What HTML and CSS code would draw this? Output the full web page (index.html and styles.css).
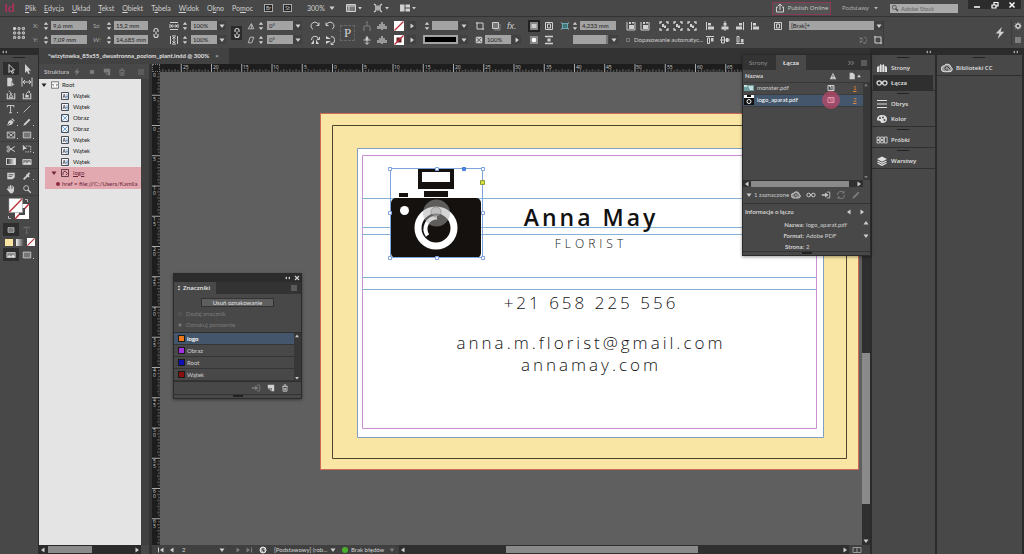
FILE: index.html
```html
<!DOCTYPE html>
<html lang="pl">
<head>
<meta charset="utf-8">
<title>wizytowka_85x55_dwustronna_poziom_plant.indd</title>
<link rel="stylesheet" href="styles.css">
</head>
<body>
<svg class="defs" aria-hidden="true">
  <defs>
    <symbol id="down" viewBox="0 0 8 8"><path d="M1.5 2.5h5L4 6z" fill="currentColor"/></symbol>
    <symbol id="up" viewBox="0 0 8 8"><path d="M1.5 5.5h5L4 2z" fill="currentColor"/></symbol>
    <symbol id="right" viewBox="0 0 8 8"><path d="M2.5 1.5v5L6 4z" fill="currentColor"/></symbol>
    <symbol id="left" viewBox="0 0 8 8"><path d="M5.5 1.5v5L2 4z" fill="currentColor"/></symbol>
    <symbol id="spin" viewBox="0 0 6 10"><path d="M.8 3.8L3 1l2.2 2.8zM.8 6.2L3 9l2.2-2.8z" fill="currentColor"/></symbol>
    <symbol id="menu" viewBox="0 0 8 8"><path d="M1 2h6M1 4h6M1 6h6" stroke="currentColor" stroke-width=".8"/></symbol>
    <symbol id="dbl" viewBox="0 0 8 8"><path d="M4 2.500v3L2 4zM7 2.500v3L5 4z" fill="currentColor"/></symbol>
    <symbol id="dblr" viewBox="0 0 8 8"><path d="M1.500 2L3.500 4L1.500 6M4.500 2L6.500 4L4.500 6" fill="none" stroke="currentColor" stroke-width=".9"/></symbol>
    <symbol id="chain" viewBox="0 0 12 12"><path d="M4 5V3.500a2 2 0 0 1 4 0V5M4 7v1.500a2 2 0 0 0 4 0V7M6 4.500v3" fill="none" stroke="currentColor" stroke-width="1.200"/></symbol>
    <symbol id="link" viewBox="0 0 12 10"><circle cx="3.200" cy="5" r="2.200" fill="none" stroke="currentColor" stroke-width="1.200"/><circle cx="8.800" cy="5" r="2.200" fill="none" stroke="currentColor" stroke-width="1.200"/><path d="M4.500 5h3" stroke="currentColor"/></symbol>
    <symbol id="hscale" viewBox="0 0 10 10"><path d="M1 1.500h8M1 8.500h8M1 3v4M9 3v4M2 5h6M3.500 3.500L2 5l1.500 1.500M6.500 3.500L8 5 6.500 6.500" fill="none" stroke="currentColor"/></symbol>
    <symbol id="vscale" viewBox="0 0 10 10"><path d="M1.500 1v8M8.500 1v8M3 1h4M3 9h4M5 2v6M3.500 3.500L5 2l1.500 1.500M3.500 6.500L5 8l1.500-1.500" fill="none" stroke="currentColor"/></symbol>
    <symbol id="angle" viewBox="0 0 10 10"><path d="M1.500 8.500h7L5.500 2z" fill="none" stroke="currentColor"/><path d="M5.500 3v5" stroke="currentColor"/></symbol>
    <symbol id="shear" viewBox="0 0 10 10"><path d="M1.500 8.500L4 1.500h4.500L6 8.500z" fill="none" stroke="currentColor"/></symbol>
    <symbol id="rotr" viewBox="0 0 10 10"><path d="M3 8.300A3.800 3.800 0 1 1 8.500 4M9 1.500V4.500H6.500" fill="none" stroke="currentColor"/></symbol>
    <symbol id="rotl" viewBox="0 0 10 10"><path d="M7 8.300A3.800 3.800 0 1 0 1.500 4M1 1.500V4.500H3.500" fill="none" stroke="currentColor"/></symbol>
    <symbol id="fliph" viewBox="0 0 10 10"><path d="M1 9h3V4.500zM9 9H6V4.500z" fill="currentColor"/><path d="M1.500 5a3.500 3.500 0 0 1 7-.5M9.500 2v2.500H7" fill="none" stroke="currentColor"/></symbol>
    <symbol id="flipv" viewBox="0 0 10 10"><path d="M1 1v3h5zM1 9V6h5z" fill="currentColor"/><path d="M6 1.500a3.500 3.500 0 0 1 .5 7M8.500 9.500H6V7.500" fill="none" stroke="currentColor"/></symbol>
    <symbol id="tree" viewBox="0 0 10 10"><path d="M5 1v4M2 9V5h6v4M1 9h2M7 9h2M4 1h2" fill="none" stroke="currentColor"/></symbol>
    <symbol id="dist" viewBox="0 0 10 10"><path d="M1 8V5M3 8V3M5 9V1M7 8V3M9 8V5" stroke="currentColor" stroke-width="1.200"/></symbol>
    <symbol id="pin" viewBox="0 0 10 10"><path d="M5 1v8M1.500 5h7M3 7.500L5 9.500l2-2" fill="none" stroke="currentColor"/><circle cx="5" cy="3.500" r="1.500" fill="currentColor"/></symbol>
    <symbol id="nofill" viewBox="0 0 10 10"><path d="M0 0h10v10H0z" fill="#fff"/><path d="M.5 9.500l9-9" stroke="#b8303a" stroke-width="1.300"/></symbol>
    <symbol id="nostroke" viewBox="0 0 10 10"><path d="M0 0h10v10H0z" fill="#fff"/><path d="M2.500 2.500h5v5h-5z" fill="#6b2228"/><path d="M.5 9.500l9-9" stroke="#b8303a" stroke-width="1.300"/></symbol>
    <symbol id="crop" viewBox="0 0 10 10"><path d="M2 1v7h7M1 2h7v7" fill="none" stroke="currentColor"/></symbol>
    <symbol id="box" viewBox="0 0 10 10"><path d="M1.500 1.500h6v6h-6z" fill="#777" stroke="currentColor"/><path d="M3 9h6V3" fill="none" stroke="#888"/></symbol>
    <symbol id="opac" viewBox="0 0 10 10"><path d="M1.500 1.500h7v7h-7z" fill="#bbb" stroke="#ddd"/><path d="M2 2l6 6M8 2L2 8" stroke="#555"/></symbol>
    <symbol id="wrap" viewBox="0 0 10 10"><path d="M1 1h8v8H1z" fill="#888"/><path d="M2.500 3h5v4h-5z" fill="#ccc"/></symbol>
    <symbol id="wrap2" viewBox="0 0 10 10"><path d="M1.500 1.500h7v7h-7zM3.500 3h3v4h-3z" fill="none" stroke="currentColor"/></symbol>
    <symbol id="wrap3" viewBox="0 0 10 10"><path d="M1 1h8v8H1z" fill="#888"/><circle cx="5" cy="5" r="2.300" fill="#fff"/></symbol>
    <symbol id="wrap4" viewBox="0 0 10 10"><path d="M1 1.500h8M1 8.500h8" stroke="currentColor" stroke-width="1.500"/><path d="M3.500 3.500h3v3h-3z" fill="currentColor"/></symbol>
    <symbol id="corner" viewBox="0 0 12 10"><path d="M3 2h6v6H3z" fill="#477" stroke="#6fb6c8"/><path d="M1 1l2 1M11 1L9 2M1 9l2-1M11 9L9 8" stroke="#9fd4e0"/></symbol>
    <symbol id="fit" viewBox="0 0 10 10"><path d="M1 1v8h8V1" fill="none" stroke="currentColor"/><path d="M3 4h5v4H3zM3 1h2v2H3zM6 1h2v1.500H6z" fill="currentColor"/></symbol>
    <symbol id="fit2" viewBox="0 0 10 10"><path d="M1 3V1h2M7 1h2v2M9 7v2H7M3 9H1V7" fill="none" stroke="currentColor" stroke-width="1.300"/><path d="M3 3h2v1.500h2V7H5V6H3z" fill="currentColor"/></symbol>
    <symbol id="screen" viewBox="0 0 10 10"><path d="M2 2.500h6v5H2z" fill="#aaa"/><path d="M1 1l2 1.500M9 1L7 2.500M1 9l2-1.500M9 9L7 7.500" stroke="currentColor" stroke-width="1.300"/></symbol>
    <symbol id="viewopt" viewBox="0 0 10 10"><path d="M.5 1.500h9v7h-9z" fill="#777" stroke="currentColor"/><path d="M1 3h8M3 3v5" stroke="currentColor"/></symbol>
    <symbol id="arrange" viewBox="0 0 10 10"><path d="M0 1.500h4.500v7H0zM5.500 1.500H10v3H5.500zM5.500 5.500H10v3H5.500z" fill="currentColor"/></symbol>
    <symbol id="al" viewBox="0 0 10 10"><path d="M1.500 1v8" stroke="currentColor"/><path d="M3 2h3v2.500H3zM3 5.500h6v3H3z" fill="currentColor"/></symbol>
    <symbol id="ac" viewBox="0 0 10 10"><path d="M5 0v10" stroke="currentColor"/><path d="M3.500 2h3v2.500h-3zM1.500 5.500h7v3h-7z" fill="currentColor"/></symbol>
    <symbol id="ar" viewBox="0 0 10 10"><path d="M8.500 1v8" stroke="currentColor"/><path d="M4 2h3v2.500H4zM1 5.500h6v3H1z" fill="currentColor"/></symbol>
    <symbol id="at" viewBox="0 0 10 10"><path d="M1 1.500h8M2.500 3h2v5.500h-2z" fill="none" stroke="currentColor"/><path d="M6 3h2.500v3.500H6z" fill="currentColor"/></symbol>
    <symbol id="am" viewBox="0 0 10 10"><path d="M0 5h10M1.500 2h3v6h-3z" fill="none" stroke="currentColor"/><path d="M6 3h2.500v4H6z" fill="currentColor"/></symbol>
    <symbol id="ab" viewBox="0 0 10 10"><path d="M1 8.500h8M2 1.500h2V7H2z" fill="none" stroke="currentColor"/><path d="M6 4h2.500v3.500H6z" fill="currentColor"/></symbol>
    <symbol id="doc" viewBox="0 0 10 10"><path d="M2 1h4l2.500 2.500V9H2z" fill="currentColor"/></symbol>
    <symbol id="warn" viewBox="0 0 10 10"><path d="M5 .8L9 9H1z" fill="currentColor"/><path d="M5 3.500v3M5 7.300v1" stroke="#484848"/></symbol>
    <symbol id="trash" viewBox="0 0 10 10"><path d="M1.500 3h7M4 2.500V1h2v1.500M2.500 3.500v5.500h5V3.500M4.200 5v3M5.800 5v3" fill="none" stroke="currentColor"/></symbol>
    <symbol id="newp" viewBox="0 0 10 10"><path d="M1 1h8v8H6V5H1z" fill="currentColor"/><path d="M1.500 6H5v3" fill="none" stroke="currentColor"/></symbol>
    <symbol id="bolt" viewBox="0 0 10 10"><path d="M6.500 0L1.500 5.500h3L3 10l5.500-6h-3z" fill="currentColor"/></symbol>
    <symbol id="gear" viewBox="0 0 10 10"><circle cx="5" cy="5" r="2.600" fill="none" stroke="currentColor" stroke-width="1.800"/><path d="M5 .5v2M5 7.500v2M.5 5h2M7.500 5h2M2 2l1 1M8 8L7 7M8 2L7 3M2 8l1-1" stroke="currentColor"/></symbol>
    <symbol id="t-sel" viewBox="0 0 12 12"><path d="M4 1.500v8l2-2 1.300 3 1.200-.6L7.200 7H9.500z" fill="none" stroke="currentColor"/></symbol>
    <symbol id="t-dir" viewBox="0 0 12 12"><path d="M4 1v9l2-2 1.300 3 1.500-.6L7.500 7.500H10z" fill="currentColor"/></symbol>
    <symbol id="t-page" viewBox="0 0 12 12"><path d="M1.500 1h4.500l1.500 1.500V11h-6z" fill="currentColor"/><path d="M7 5v6.500l1.500-1.500h2z" fill="currentColor" stroke="#484848" stroke-width=".6"/></symbol>
    <symbol id="t-gap" viewBox="0 0 12 12"><path d="M1 1.500v9M11 1.500v9M2.500 6h7M4 4L2 6l2 2M8 4l2 2-2 2" fill="none" stroke="currentColor"/></symbol>
    <symbol id="t-coll" viewBox="0 0 12 12"><path d="M1.500 4v6.500h9V4" fill="none" stroke="currentColor" stroke-width="1.300"/><path d="M4 7h4v2H4zM3 1.500c2 0 3 1 3 4M4.500 4L6 6l1.500-2" fill="none" stroke="currentColor"/></symbol>
    <symbol id="t-plac" viewBox="0 0 12 12"><path d="M1.500 4v6.500h9V4" fill="none" stroke="currentColor" stroke-width="1.300"/><path d="M4 6h4v3H4z" fill="currentColor"/><path d="M5 6c0-3 1.500-3.500 4-4M7.500 1L9.500 2 8.500 4" fill="none" stroke="currentColor"/></symbol>
    <symbol id="t-type" viewBox="0 0 12 12"><path d="M1.500 4V1.800h8V4M5.500 2v8.500M3.800 10.500h3.400" fill="none" stroke="currentColor" stroke-width="1.100"/></symbol>
    <symbol id="t-line" viewBox="0 0 12 12"><path d="M2 10l8-8" stroke="currentColor"/></symbol>
    <symbol id="t-pen" viewBox="0 0 12 12"><path d="M1.500 10.500l1.300-5L6 3.300l3 3L6.600 9.200z" fill="currentColor"/><path d="M7 2l3 3" stroke="currentColor" stroke-width="1.500"/><path d="M2 10l3-3" stroke="#484848"/></symbol>
    <symbol id="t-pencil" viewBox="0 0 12 12"><path d="M1.500 10.500l1-2.500 6-6 1.600 1.500-6 6z" fill="currentColor"/></symbol>
    <symbol id="t-frame" viewBox="0 0 12 12"><path d="M1.500 2.500h9v7h-9zM1.500 2.500l9 7M10.500 2.500l-9 7" fill="none" stroke="currentColor"/></symbol>
    <symbol id="t-rect" viewBox="0 0 12 12"><path d="M1.500 2.500h9v7h-9z" fill="#777" stroke="currentColor"/></symbol>
    <symbol id="t-cut" viewBox="0 0 12 12"><path d="M3.500 4.500L10.500 9M3.500 7.500L10.500 3" stroke="currentColor" stroke-width="1.200"/><circle cx="2.600" cy="3.800" r="1.400" fill="none" stroke="currentColor"/><circle cx="2.600" cy="8.200" r="1.400" fill="none" stroke="currentColor"/></symbol>
    <symbol id="t-free" viewBox="0 0 12 12"><path d="M1 1v7l2-2h3z" fill="currentColor"/><path d="M4.500 2.500h6v7H4" fill="none" stroke="currentColor" stroke-dasharray="2 1"/></symbol>
    <symbol id="t-fea" viewBox="0 0 12 12"><path d="M1 3h10v6H1z" fill="#888" stroke="currentColor"/><path d="M1.500 8.500L4 6l2 2 2.500-2.500L11 8.500z" fill="#ddd"/></symbol>
    <symbol id="t-note" viewBox="0 0 12 12"><path d="M1.500 2h9v5.500L8 10H1.500z" fill="currentColor"/><path d="M3 4.500h6M3 6.500h4" stroke="#484848"/></symbol>
    <symbol id="t-eye" viewBox="0 0 12 12"><path d="M2 10l4.500-4.500" stroke="currentColor" stroke-width="2"/><path d="M5.500 4l3 3M7 5l2-3" stroke="currentColor" stroke-width="2"/></symbol>
    <symbol id="t-hand" viewBox="0 0 12 12"><path d="M3.500 7V3M5.300 6V1.800M7.200 6V2.200M9 7V3.500M1.600 6l2 2" stroke="currentColor" stroke-width="1.300" stroke-linecap="round"/><path d="M3 6h6.600v2.500L8 11H5L3 8.500z" fill="currentColor"/></symbol>
    <symbol id="t-zoom" viewBox="0 0 12 12"><circle cx="5" cy="5" r="3" fill="none" stroke="currentColor"/><path d="M7 7l3.500 3.500" stroke="currentColor" stroke-width="1.600"/></symbol>
    <symbol id="s-txt" viewBox="0 0 8 8"><path d="M.5.5h7v7h-7z" fill="#f4f4f4" stroke="#4a4f58"/><path d="M2 6l1.200-4L4.500 6M2.400 4.700h1.700" fill="none" stroke="#445" stroke-width=".7"/><path d="M5 3h2M5 4.500h2M5 6h2" stroke="#5a8cc0" stroke-width=".8"/></symbol>
    <symbol id="s-img" viewBox="0 0 8 8"><path d="M.5.500h7v7h-7z" fill="#eef4fa" stroke="#4a4f58"/><path d="M1 1l6 6M7 1L1 7" stroke="#5590c8" stroke-width=".8"/></symbol>
    <symbol id="d-pages" viewBox="0 0 12 10"><path d="M1 4l2.500-1.500V9H1zM8.500 2.500L11 4v5H8.500z" fill="currentColor"/><path d="M4 1l1.700 1v7H4zM8 1L6.300 2v7H8z" fill="currentColor"/></symbol>
    <symbol id="d-stroke" viewBox="0 0 12 10"><path d="M1 1.500h10M1 5h10M1 8.500h10" stroke="currentColor"/></symbol>
    <symbol id="d-color" viewBox="0 0 12 10"><path d="M6 1c3 0 5 1.600 5 4S9 9 6 9c-1.500 0-1-1.500-2-2S1 7 1 5s2-4 5-4z" fill="currentColor"/><circle cx="4" cy="4" r="1" fill="#484848"/><circle cx="7" cy="3.500" r="1" fill="#484848"/><circle cx="8.500" cy="6" r="1" fill="#484848"/></symbol>
    <symbol id="d-swatch" viewBox="0 0 12 10"><path d="M1 2h2.700v2.500H1zM4.700 2h2.700v2.500H4.700zM1 5.500h2.700V8H1zM4.700 5.500h2.700V8H4.700zM8.400 2h2.700v6H8.400z" fill="none" stroke="currentColor" stroke-width=".8"/></symbol>
    <symbol id="d-layers" viewBox="0 0 12 10"><path d="M6 .5l5 2.500-5 2.700L1 3z" fill="currentColor"/><path d="M1.500 5L6 7.400 10.500 5M1.500 7L6 9.400 10.500 7" fill="none" stroke="currentColor" stroke-width="1.200"/></symbol>
    <symbol id="cc" viewBox="0 0 12 10"><path d="M3.500 8.700a3 3 0 0 1-.3-6A3.800 3.800 0 0 1 10 4.200a2.400 2.400 0 0 1-1 4.500z" fill="#999" stroke="currentColor"/><path d="M7 6.500a1.800 1.800 0 1 1 0-2.500l2 2" fill="none" stroke="#383838"/></symbol>
    <symbol id="goto" viewBox="0 0 12 10"><path d="M1 4h4V2l4 3-4 3V6H1z" fill="currentColor"/><path d="M7 1.500h3.500v7H7" fill="none" stroke="currentColor"/></symbol>
    <symbol id="refresh" viewBox="0 0 10 10"><path d="M1.500 5A3.500 3.500 0 0 1 8 3M8.500 5A3.500 3.500 0 0 1 2 7M8 1v2H6M2 9V7h2" fill="none" stroke="currentColor"/></symbol>
    <symbol id="emb" viewBox="0 0 8 8"><path d="M1 1.500h6v5H1z" fill="none" stroke="currentColor"/><path d="M2.500 2.500h1.500v3M5 3h1.500M5 5h1.500" stroke="currentColor" fill="none"/></symbol>
  </defs>
</svg>

<header class="menubar">
  <strong class="logo">Id</strong>
  <nav class="menus">
    <a href="#"><u>P</u>lik</a><a href="#"><u>E</u>dycja</a><a href="#"><u>U</u>kład</a><a href="#"><u>T</u>ekst</a><a href="#"><u>O</u>biekt</a><a href="#">T<u>a</u>bela</a><a href="#"><u>W</u>idok</a><a href="#">O<u>k</u>no</a><a href="#">Po<u>m</u>oc</a>
  </nav>
  <div class="apps">
    <button class="app">Br</button><button class="app">St</button>
    <button class="zoom">300% <svg class="i8"><use href="#down"/></svg></button>
    <button class="view"><svg class="i10"><use href="#viewopt"/></svg><svg class="i6"><use href="#down"/></svg></button>
    <button class="view"><svg class="i10"><use href="#screen"/></svg><svg class="i6"><use href="#down"/></svg></button>
    <button class="view"><svg class="i10"><use href="#arrange"/></svg><svg class="i6"><use href="#down"/></svg></button>
  </div>
  <button class="publish"><svg class="i10" viewBox="0 0 10 10"><path d="M3 4H1.500v5h7V4H7M5 7V1.500M3 3l2-2 2 2" fill="none" stroke="currentColor"/></svg>Publish Online</button>
  <button class="workspace">Podstawy <svg class="i6"><use href="#down"/></svg></button>
  <label class="search"><svg class="i8"><use href="#t-zoom"/></svg><input type="text" placeholder="Adobe Stock" aria-label="Adobe Stock"></label>
  <div class="window-buttons">
    <button aria-label="Minimalizuj"><svg class="i8" viewBox="0 0 8 8"><path d="M1 6h6" stroke="currentColor" stroke-width="1.500"/></svg></button>
    <button aria-label="Przywróć"><svg class="i8" viewBox="0 0 8 8"><path d="M1 4h4v3H1zM3 4V1.500h4V5H5" fill="none" stroke="currentColor" stroke-width="1.200"/></svg></button>
    <button aria-label="Zamknij"><svg class="i8" viewBox="0 0 8 8"><path d="M1.500 1.500l5 5M6.500 1.500l-5 5" stroke="currentColor" stroke-width="1.500"/></svg></button>
  </div>
</header>

<section class="controls" aria-label="Sterowanie">
  <div class="group g-ref"><svg class="i12" viewBox="0 0 12 12"><path d="M1.500 1.500h9v9h-9zM6 1.500v9M1.500 6h9" fill="none" stroke="#888" stroke-dasharray="1 1"/><g fill="#777" stroke="#ccc" stroke-width=".8"><path d="M.5.500h2v2h-2z" fill="#eee"/><path d="M5 .5h2v2H5zM9.500.500h2v2h-2zM.5 5h2v2h-2zM5 5h2v2H5zM9.500 5h2v2h-2zM.5 9.500h2v2h-2zM5 9.500h2v2H5zM9.500 9.500h2v2h-2z"/></g></svg></div>
  <div class="group g-pos">
    <label class="row"><span class="lab">X:</span><svg class="spin"><use href="#spin"/></svg><input class="field w36" type="text" value="9,6 mm"></label>
    <label class="row"><span class="lab">Y:</span><svg class="spin"><use href="#spin"/></svg><input class="field w36" type="text" value="7,09 mm"></label>
  </div>
  <div class="group g-size">
    <label class="row"><span class="lab wide">Sz:</span><svg class="spin"><use href="#spin"/></svg><input class="field w34" type="text" value="15,2 mm"></label>
    <label class="row"><span class="lab wide">W:</span><svg class="spin"><use href="#spin"/></svg><input class="field w34" type="text" value="14,685 mm"></label>
  </div>
  <div class="group g-chain"><svg class="i12"><use href="#chain"/></svg></div>
  <div class="group g-scale">
    <div class="row"><svg class="i10"><use href="#hscale"/></svg><svg class="spin"><use href="#spin"/></svg><input class="field w26" type="text" value="100%" aria-label="Skala X"><button class="drop" aria-label="Wybierz"><svg class="i8"><use href="#down"/></svg></button></div>
    <div class="row"><svg class="i10"><use href="#vscale"/></svg><svg class="spin"><use href="#spin"/></svg><input class="field w26" type="text" value="100%" aria-label="Skala Y"><button class="drop" aria-label="Wybierz"><svg class="i8"><use href="#down"/></svg></button></div>
  </div>
  <div class="group g-lock"><button class="lock" aria-label="Zachowaj proporcje"><svg class="i12"><use href="#chain"/></svg></button></div>
  <div class="group g-rot">
    <div class="row"><svg class="i8"><use href="#angle"/></svg><svg class="spin"><use href="#spin"/></svg><input class="field w26" type="text" value="0°" aria-label="Obrót"><button class="drop" aria-label="Wybierz"><svg class="i8"><use href="#down"/></svg></button></div>
    <div class="row"><svg class="i8"><use href="#shear"/></svg><svg class="spin"><use href="#spin"/></svg><input class="field w26" type="text" value="0°" aria-label="Pochylenie"><button class="drop" aria-label="Wybierz"><svg class="i8"><use href="#down"/></svg></button></div>
  </div>
  <div class="group g-icons">
    <div class="row pair"><svg class="i10"><use href="#rotr"/></svg><svg class="i10"><use href="#rotl"/></svg></div>
    <div class="row pair"><svg class="i10"><use href="#fliph"/></svg><svg class="i10"><use href="#flipv"/></svg></div>
  </div>
  <div class="group g-p"><span class="para">P</span></div>
  <div class="group g-icons g-tree">
    <div class="row pair"><svg class="i10 dim"><use href="#tree"/></svg><svg class="i10"><use href="#dist"/></svg></div>
    <div class="row pair"><svg class="i10"><use href="#pin"/></svg><svg class="i10"><use href="#dist"/></svg></div>
  </div>
  <div class="group g-fill">
    <div class="row"><svg class="i10"><use href="#nofill"/></svg><button class="drop" aria-label="Wypełnienie"><svg class="i8"><use href="#right"/></svg></button></div>
    <div class="row"><svg class="i10"><use href="#nostroke"/></svg><button class="drop" aria-label="Obrys"><svg class="i8"><use href="#right"/></svg></button></div>
  </div>
  <div class="group g-stroke">
    <div class="row end"><svg class="spin"><use href="#spin"/></svg><input class="field w26" type="text" value="" aria-label="Grubość obrysu"><button class="drop" aria-label="Wybierz"><svg class="i8"><use href="#down"/></svg></button></div>
    <div class="row end"><span class="line-style"></span><button class="drop" aria-label="Styl obrysu"><svg class="i8"><use href="#down"/></svg></button></div>
  </div>
  <div class="group g-fx">
    <div class="row fxrow"><svg class="i10"><use href="#crop"/></svg><svg class="i10"><use href="#box"/></svg><em class="fx">fx.</em></div>
    <div class="row"><svg class="i8"><use href="#opac"/></svg><input class="field w26" type="text" value="100%" aria-label="Krycie"><button class="drop" aria-label="Wybierz"><svg class="i8"><use href="#right"/></svg></button></div>
  </div>
  <div class="group g-wrap">
    <div class="row pair"><svg class="i10 on"><use href="#wrap"/></svg><svg class="i10"><use href="#wrap2"/></svg></div>
    <div class="row pair"><svg class="i10"><use href="#wrap3"/></svg><svg class="i10"><use href="#wrap4"/></svg></div>
  </div>
  <div class="group g-corner">
    <div class="row"><svg class="i10"><use href="#corner"/></svg><svg class="spin"><use href="#spin"/></svg><input class="field w36" type="text" value="4,233 mm" aria-label="Narożnik"></div>
    <div class="row end"><span class="corner-style"></span><button class="drop" aria-label="Kształt narożnika"><svg class="i8"><use href="#down"/></svg></button></div>
  </div>
  <div class="group g-fit">
    <div class="row fits"><svg class="i10"><use href="#fit"/></svg><svg class="i10"><use href="#fit"/></svg><svg class="i10 gap"><use href="#fit2"/></svg><svg class="i10"><use href="#fit2"/></svg><svg class="i10"><use href="#fit2"/></svg></div>
    <label class="row auto"><input type="checkbox">Dopasowanie automatyc...</label>
  </div>
  <div class="group g-align">
    <div class="row pair"><svg class="i10"><use href="#al"/></svg><svg class="i10"><use href="#ac"/></svg><svg class="i10"><use href="#ar"/></svg><svg class="i10"><use href="#al"/></svg></div>
    <div class="row pair"><svg class="i10"><use href="#at"/></svg><svg class="i10"><use href="#am"/></svg><svg class="i10"><use href="#ab"/></svg></div>
  </div>
  <div class="group g-style">
    <div class="row"><svg class="i10"><use href="#wrap2"/></svg><span class="combo"><input class="field" type="text" value="[Brak]+" aria-label="Styl obiektu"><button class="drop" aria-label="Wybierz"><svg class="i8"><use href="#down"/></svg></button></span></div>
    <div class="row end"><svg class="i8 dim"><use href="#flipv"/></svg><svg class="i10"><use href="#crop"/></svg></div>
  </div>
  <div class="group g-end"><svg class="i12"><use href="#bolt"/></svg></div>
  <div class="group g-menu"><div class="row"><svg class="i8"><use href="#gear"/></svg></div><div class="row"><svg class="i8"><use href="#menu"/></svg></div></div>
</section>

<main class="work">
  <aside class="tools" aria-label="Narzędzia">
    <div class="strip left"><svg class="i8"><use href="#dbl"/></svg></div>
    <div class="grip"></div>
    <div class="toolgrid">
      <button class="active" aria-label="Zaznaczanie"><svg class="i12"><use href="#t-sel"/></svg></button><button aria-label="Zaznaczanie bezpośrednie"><svg class="i12"><use href="#t-dir"/></svg></button>
      <button aria-label="Strona"><svg class="i10"><use href="#t-page"/></svg></button><button aria-label="Odstęp"><svg class="i12"><use href="#t-gap"/></svg></button>
      <button aria-label="Zbieranie"><svg class="i10"><use href="#t-coll"/></svg></button><button aria-label="Umieszczanie"><svg class="i10"><use href="#t-plac"/></svg></button>
    </div>
    <div class="toolgrid">
      <button class="more" aria-label="Tekst"><svg class="i10"><use href="#t-type"/></svg></button><button aria-label="Linia"><svg class="i10"><use href="#t-line"/></svg></button>
      <button class="more" aria-label="Pióro"><svg class="i10"><use href="#t-pen"/></svg></button><button class="more" aria-label="Ołówek"><svg class="i10"><use href="#t-pencil"/></svg></button>
      <button class="more" aria-label="Ramka"><svg class="i10"><use href="#t-frame"/></svg></button><button class="more" aria-label="Prostokąt"><svg class="i10"><use href="#t-rect"/></svg></button>
    </div>
    <div class="toolgrid">
      <button aria-label="Nożyczki"><svg class="i10"><use href="#t-cut"/></svg></button><button class="more" aria-label="Przekształcanie"><svg class="i10"><use href="#t-free"/></svg></button>
      <button aria-label="Gradient"><span class="gradient"></span></button><button aria-label="Wtapianie"><svg class="i10"><use href="#t-fea"/></svg></button>
    </div>
    <div class="toolgrid">
      <button aria-label="Notatka"><svg class="i10"><use href="#t-note"/></svg></button><button class="more" aria-label="Kroplomierz"><svg class="i10"><use href="#t-eye"/></svg></button>
      <button aria-label="Rączka"><svg class="i10"><use href="#t-hand"/></svg></button><button aria-label="Lupka"><svg class="i10"><use href="#t-zoom"/></svg></button>
    </div>
    <svg class="fillstroke" viewBox="0 0 24 24"><path d="M8 7h14v15H8z" fill="#fff"/><path d="M8 22L22 7" stroke="#b8303a" stroke-width="1.500"/><path d="M12 11h6v7h-6z" fill="#484848"/><path d="M2 1.500h13.500v14H2z" fill="#fff" stroke="#999" stroke-width=".6"/><path d="M2.300 15L15 2" stroke="#b8303a" stroke-width="1.300"/><path d="M18 2.500h2.500V5M1.500 19v2.500H4" fill="none" stroke="#bbb"/></svg>
    <div class="toolgrid small">
      <button class="active" aria-label="Kontener"><svg class="i8"><use href="#t-rect"/></svg></button><button class="dim" aria-label="Formatowanie tekstu"><svg class="i8"><use href="#t-type"/></svg></button>
    </div>
    <div class="swatches"><span class="sw yellow"></span><span class="sw grad"></span><svg class="i8"><use href="#nofill"/></svg></div>
    <div class="toolgrid small">
      <button class="active" aria-label="Widok normalny"><svg class="i10"><use href="#t-fea"/></svg></button><button class="more" aria-label="Podgląd"><svg class="i10"><use href="#t-rect"/></svg></button>
    </div>
  </aside>

  <section class="document">
    <div class="tabs"><div class="tab">*wizytowka_85x55_dwustronna_poziom_plant.indd @ 300% <button aria-label="Zamknij">×</button></div></div>
    <div class="split">
      <aside class="structure" aria-label="Struktura">
        <div class="structure-head"><strong>Struktura</strong><svg class="i8"><use href="#bolt"/></svg><svg class="i8" viewBox="0 0 8 8"><circle cx="4" cy="4" r="2.300" fill="currentColor"/></svg><svg class="i8"><use href="#newp"/></svg><svg class="i8"><use href="#trash"/></svg><svg class="i8"><use href="#menu"/></svg></div>
        <div class="structure-body">
          <ul class="tree">
            <li class="root"><svg class="i8"><use href="#down"/></svg><svg class="i8" viewBox="0 0 10 10"><path d="M.5 1h9v8h-9z" fill="#fff" stroke="#555"/><path d="M3.500 3.500L2 5l1.500 1.500M6.500 3.500L8 5 6.500 6.500" fill="none" stroke="#333"/></svg>Root</li>
            <li><svg class="i8"><use href="#s-txt"/></svg>Wątek</li>
            <li><svg class="i8"><use href="#s-txt"/></svg>Wątek</li>
            <li><svg class="i8"><use href="#s-img"/></svg>Obraz</li>
            <li><svg class="i8"><use href="#s-img"/></svg>Obraz</li>
            <li><svg class="i8"><use href="#s-txt"/></svg>Wątek</li>
            <li><svg class="i8"><use href="#s-txt"/></svg>Wątek</li>
            <li><svg class="i8"><use href="#s-txt"/></svg>Wątek</li>
            <li class="marked logo-item"><svg class="i8"><use href="#down"/></svg><svg class="i8" viewBox="0 0 8 8"><path d="M.5.500h7v7h-7z" fill="none" stroke="#6b3a48"/><path d="M2 6V3.500L4 2l2.500 2.500L5 6" fill="none" stroke="#6b3a48"/></svg><u>logo</u></li>
            <li class="marked attr"><span class="bullet"></span>href = file:///C:/Users/Kamila</li>
          </ul>
          <div class="vbar"></div>
        </div>
        <div class="hbar"><svg class="i8"><use href="#left"/></svg><span class="thumb"></span><svg class="i8 last"><use href="#right"/></svg></div>
      </aside>

      <section class="page-view">
        <div class="ruler-row">
          <div class="ruler-corner"></div>
          <svg class="ruler-h">
            <defs><pattern id="ph" x="-9.500" y="0" width="30.250" height="8" patternUnits="userSpaceOnUse"><path d="M.5 0v8" stroke="#aaa"/><path d="M3.500 6v2M6.500 5v3M9.500 6v2M12.500 5v3M15.500 6v2M18.500 5v3M21.500 6v2M24.500 5v3M27.500 6v2" stroke="#777" stroke-width=".8"/></pattern></defs>
            <rect width="100%" height="8" fill="url(#ph)"/>
            <g class="ruler-text"><text x="23" y="5">25</text><text x="53" y="5">20</text><text x="83" y="5">15</text><text x="113" y="5">10</text><text x="144" y="5">5</text><text x="174" y="5">0</text><text x="204" y="5">5</text><text x="234" y="5">10</text><text x="265" y="5">15</text><text x="295" y="5">20</text><text x="325" y="5">25</text><text x="355" y="5">30</text><text x="386" y="5">35</text><text x="416" y="5">40</text><text x="446" y="5">45</text><text x="476" y="5">50</text><text x="507" y="5">55</text><text x="537" y="5">60</text><text x="567" y="5">65</text></g>
          </svg>
        </div>
        <div class="canvas-row">
          <svg class="ruler-v">
            <defs><pattern id="pv" x="0" y="-7.500" width="8" height="30.250" patternUnits="userSpaceOnUse"><path d="M0 .5h8" stroke="#aaa"/><path d="M6 3.500h2M5 6.500h3M6 9.500h2M5 12.500h3M6 15.500h2M5 18.500h3M6 21.500h2M5 24.500h3M6 27.500h2" stroke="#777" stroke-width=".8"/></pattern></defs>
            <rect width="8" height="100%" fill="url(#pv)"/>
            <g class="ruler-text"><text x="1" y="5">0</text><text x="1" y="29">5</text><text x="1" y="59">0</text><text x="1" y="89">5</text><text y="118"><tspan x="1">1</tspan><tspan x="1" dy="5">0</tspan></text><text y="149"><tspan x="1">1</tspan><tspan x="1" dy="5">5</tspan></text><text y="179"><tspan x="1">2</tspan><tspan x="1" dy="5">0</tspan></text><text y="209"><tspan x="1">2</tspan><tspan x="1" dy="5">5</tspan></text><text y="239"><tspan x="1">3</tspan><tspan x="1" dy="5">0</tspan></text><text y="270"><tspan x="1">3</tspan><tspan x="1" dy="5">5</tspan></text><text y="300"><tspan x="1">4</tspan><tspan x="1" dy="5">0</tspan></text><text y="330"><tspan x="1">4</tspan><tspan x="1" dy="5">5</tspan></text><text y="360"><tspan x="1">5</tspan><tspan x="1" dy="5">0</tspan></text><text y="391"><tspan x="1">5</tspan><tspan x="1" dy="5">5</tspan></text><text y="421"><tspan x="1">6</tspan><tspan x="1" dy="5">0</tspan></text><text y="451"><tspan x="1">6</tspan><tspan x="1" dy="5">5</tspan></text></g>
          </svg>
          <div class="canvas">
            <article class="card">
              <svg class="art" viewBox="0 0 539 357" aria-label="Aparat fotograficzny">
                <g fill="none">
                  <path d="M12.500 12.500h514v333h-514z" stroke="#4c4630"/>
                  <path d="M37.500 35.500h466v289h-466z" fill="#fff" stroke="#7f9fc4"/>
                  <path d="M42.500 42.500h454v273h-454z" stroke="#c98fd2"/>
                  <path d="M42 85.500h454M42 114.500h454M42 121.500h454M42 164.500h454M42 176.500h454" stroke="#86b0d4"/>
                </g>
                <g fill="#14110f">
                  <path d="M98 55h36v21H98zM102 59v10h28V59z" fill-rule="evenodd"/>
                  <path d="M104 78h24v6h-24zM79 80h9v4h-9z"/>
                  <rect x="71" y="85" width="90" height="60" rx="5"/>
                </g>
                <circle cx="84.500" cy="97.500" r="4.500" fill="#fff"/>
                <circle cx="116" cy="115" r="18" fill="none" stroke="#fff" stroke-width="7"/>
                <path d="M107.500 122.500a11.500 11.500 0 0 1 9.500-18" fill="none" stroke="#fff" stroke-width="4"/>
                <circle cx="116.500" cy="100" r="13.500" fill="#aaa" opacity=".5"/>
                <circle cx="116" cy="99" r="5" fill="#aaa" opacity=".5" stroke="#666"/>
                <path d="M70.500 55.500h92v89h-92z" fill="none" stroke="#7fa3dc"/>
                <g fill="#fff" stroke="#7fa3dc"><path d="M68.500 54.500h3v3h-3zM115.500 54.500h3v3h-3zM161.500 54.500h3v3h-3zM68.500 98.500h3v3h-3zM161.500 98.500h3v3h-3zM68.500 143.500h3v3h-3zM115.500 143.500h3v3h-3zM161.500 143.500h3v3h-3z"/></g>
                <path d="M142.500 54.500h3v3h-3z" fill="#4a80e0" stroke="#4a80e0"/>
                <path d="M160.500 67.500h4v4h-4z" fill="#d4e03c" stroke="#8c9a3c"/>
              </svg>
              <div class="card-text">
                <h1>Anna May</h1>
                <p class="role">FLORIST</p>
                <p class="phone">+21 658 225 556</p>
                <p class="mail">anna.m.florist@gmail.com</p>
                <p class="mail">annamay.com</p>
              </div>
            </article>
          </div>
          <div class="vscroll"><span class="vthumb"></span><svg class="i8"><use href="#down"/></svg></div>
        </div>
        <footer class="status">
          <svg class="i8" viewBox="0 0 8 8"><path d="M1.500 1.500v5" stroke="currentColor"/><path d="M6.500 1.500v5L3 4z" fill="currentColor"/></svg><svg class="i8"><use href="#left"/></svg>
          <span class="page-no">2</span><svg class="i8"><use href="#down"/></svg>
          <svg class="i8 dim next"><use href="#right"/></svg><svg class="i8 dim" viewBox="0 0 8 8"><path d="M6.500 1.500v5" stroke="currentColor"/><path d="M1.500 1.500v5L5 4z" fill="currentColor"/></svg>
          <svg class="i8 clock" viewBox="0 0 8 8"><circle cx="4" cy="4" r="3" fill="#aaa" stroke="#eee"/><path d="M4 2v3h1.500" stroke="#333" fill="none"/></svg>
          <span class="profile">[Podstawowy] (rob...</span><svg class="i8"><use href="#down"/></svg>
          <span class="led"></span><span>Brak błędów</span><svg class="i8 dim err"><use href="#down"/></svg>
          <div class="hscroll"><svg class="i8"><use href="#left"/></svg><span class="hthumb"></span><svg class="i8 last"><use href="#right"/></svg></div>
          <svg class="i10 splitter" viewBox="0 0 10 10"><path d="M1 2.500h8v5H1zM5 2v6" fill="none" stroke="#999"/></svg>
        </footer>
      </section>
    </div>
  </section>

  <aside class="dock narrow">
    <div class="strip"><svg class="i8"><use href="#dbl"/></svg></div>
    <div class="dock-group"><button><svg class="i12w"><use href="#d-pages"/></svg>Strony</button><button class="active"><svg class="i12w"><use href="#link"/></svg>Łącza</button></div>
    <div class="dock-group"><button><svg class="i12w"><use href="#d-stroke"/></svg>Obrys</button><button><svg class="i12w"><use href="#d-color"/></svg>Kolor</button></div>
    <div class="dock-group"><button><svg class="i12w"><use href="#d-swatch"/></svg>Próbki</button></div>
    <div class="dock-group"><button><svg class="i12w"><use href="#d-layers"/></svg>Warstwy</button></div>
  </aside>
  <aside class="dock broad">
    <div class="strip"><svg class="i8"><use href="#dbl"/></svg></div>
    <div class="dock-group"><button><svg class="i12w"><use href="#cc"/></svg>Biblioteki CC</button></div>
  </aside>
</main>

<section class="panel tags" aria-label="Znaczniki">
  <div class="panel-top"><svg class="i8"><use href="#dbl"/></svg><button aria-label="Zamknij"><svg class="i8" viewBox="0 0 8 8"><path d="M2 2l4 4M6 2L2 6" stroke="currentColor" stroke-width="1.200"/></svg></button></div>
  <div class="panel-tabs"><button class="ptab active"><svg class="i6"><use href="#spin"/></svg>Znaczniki</button><svg class="i8"><use href="#menu"/></svg></div>
  <div class="tag-actions">
    <button class="untag">Usuń oznakowanie</button>
    <label><input type="radio" name="mode" disabled>Dodaj znacznik</label>
    <label><input type="radio" name="mode" checked disabled>Oznakuj ponownie</label>
  </div>
  <div class="tag-body">
    <ul class="tag-list">
      <li class="active"><span class="chip orange"></span>logo</li>
      <li><span class="chip violet"></span>Obraz</li>
      <li><span class="chip blue"></span>Root</li>
      <li><span class="chip maroon"></span>Wątek</li>
    </ul>
    <div class="mini-scroll"><svg class="i6"><use href="#up"/></svg><svg class="i6"><use href="#down"/></svg></div>
  </div>
  <div class="tag-foot"><svg class="i10 dim"><use href="#goto"/></svg><svg class="i8"><use href="#newp"/></svg><svg class="i8"><use href="#trash"/></svg></div>
  <div class="panel-grip"></div>
</section>

<section class="panel links" aria-label="Łącza">
  <div class="panel-tabs"><button class="ptab">Strony</button><button class="ptab active">Łącza</button><svg class="i8"><use href="#dblr"/></svg><svg class="i8 dim"><use href="#menu"/></svg></div>
  <div class="links-body">
    <table class="link-table">
      <thead><tr><th>Nazwa</th><th class="c-st"><svg class="i8"><use href="#warn"/></svg></th><th class="c-pg"><span class="pg-icons"><svg class="i8"><use href="#doc"/></svg><svg class="i6"><use href="#up"/></svg></span></th></tr></thead>
      <tbody>
        <tr><td><span class="file"><svg class="i10" viewBox="0 0 10 10"><path d="M0 2h10v6H0z" fill="#6f9c9c"/><path d="M0 2h3v2H0zM4 3h5v4H6z" fill="#c4dede"/></svg>monster.pdf</span></td><td class="c-st"><svg class="i8"><use href="#emb"/></svg></td><td class="c-pg"><a href="#">1</a></td></tr>
        <tr class="active"><td><span class="file"><svg class="i10" viewBox="0 0 10 10"><path d="M0 0h10v10H0z" fill="#fff"/><path d="M3 0h4v2H3zM0 3h10v7H0z" fill="#111"/><circle cx="5" cy="6.500" r="2" fill="none" stroke="#fff"/></svg>logo_aparat.pdf</span></td><td class="c-st"><span class="click"><svg class="i8"><use href="#emb"/></svg></span></td><td class="c-pg"><a href="#">2</a></td></tr>
      </tbody>
    </table>
    <div class="mini-scroll"><svg class="i6 dim"><use href="#up"/></svg><svg class="i6 dim"><use href="#down"/></svg></div>
  </div>
  <div class="links-scroll"><svg class="i8"><use href="#left"/></svg><span></span><svg class="i8"><use href="#right"/></svg></div>
  <div class="links-tools"><svg class="i8"><use href="#down"/></svg><span>1 zaznaczone</span><svg class="i10"><use href="#cc"/></svg><svg class="i10"><use href="#link"/></svg><svg class="i10"><use href="#goto"/></svg><svg class="i10 dim"><use href="#refresh"/></svg><svg class="i10 dim"><use href="#t-pencil"/></svg></div>
  <div class="info-head"><strong>Informacje o łączu</strong><svg class="i8"><use href="#left"/></svg><svg class="i8"><use href="#right"/></svg></div>
  <div class="info-body">
    <dl><dt>Nazwa:</dt><dd>logo_aparat.pdf</dd><dt>Format:</dt><dd>Adobe PDF</dd><dt>Strona:</dt><dd>2</dd></dl>
    <div class="info-arrows"><svg class="i8"><use href="#up"/></svg><svg class="i8"><use href="#down"/></svg></div>
  </div>
  <div class="panel-grip"></div>
</section>
</body>
</html>
```
FILE: styles.css
```css
* { box-sizing: border-box; }
html, body { height: 100%; }
body {
  margin: 0; position: relative; display: flex; flex-direction: column; overflow: hidden;
  background: #484848; color: #d0d0d0;
  font: 6px/8px Lato, "Open Sans", sans-serif;
}
button { font: inherit; color: inherit; background: none; border: 0; padding: 0; margin: 0; display: flex; align-items: center; }
input { font: inherit; margin: 0; min-width: 0; }
a { color: inherit; text-decoration: none; }
ul, dl, dd, p, h1 { margin: 0; padding: 0; list-style: none; }
svg { display: block; flex: none; }
.defs { position: absolute; width: 0; height: 0; }
.i6 { width: 6px; height: 6px; }
.i8 { width: 8px; height: 8px; }
.i10 { width: 10px; height: 10px; }
.i12 { width: 12px; height: 12px; }
.i12w { width: 12px; height: 10px; }
.dim { color: #7c7c7c; }

/* Menu bar */
.menubar { display: flex; align-items: center; height: 16px; flex: none; position: relative; }
.logo { width: 21px; padding-left: 4px; font-size: 12px; line-height: 14px; color: #a8325e; }
.menus { display: flex; gap: 8px; padding-left: 4px; width: 239px; font-size: 7px; }
.menus a { white-space: nowrap; }
.apps { display: flex; align-items: center; gap: 10px; flex: 1; padding-left: 4px; }
.app { width: 9px; height: 8px; border: 1px solid #aaa; background: #222; font-size: 5px; line-height: 6px; justify-content: center; }
.zoom { gap: 3px; margin-left: 5px; font-size: 7px; }
.view { gap: 1px; }
.publish { height: 13px; width: 59px; gap: 3px; border: 1px solid #8b3a56; background: #535353; justify-content: center; white-space: nowrap; font-family: "Open Sans", sans-serif; }
.workspace { margin-left: 11px; gap: 4px; width: 48px; color: #b8b8b8; font-family: "Open Sans", sans-serif; }
.search { display: flex; align-items: center; width: 68px; height: 9px; background: #aaa; color: #333; padding-left: 1px; }
.search input { width: 56px; border: 0; background: none; padding: 0 2px; height: 9px; }
.search input::placeholder { color: #666; opacity: 1; }
.window-buttons { display: flex; align-self: flex-start; margin: 0 3px 0 10px; width: 53px; height: 9px; background: #2c2c2c; color: #fff; }
.window-buttons button { flex: 1; justify-content: center; }

/* Control bar */
.controls { display: flex; height: 32px; flex: none; border-top: 1px solid #333; padding: 3px 0; background: #484848; }
.group { display: flex; flex-direction: column; justify-content: center; gap: 4px; flex: none; }
.row { display: flex; align-items: center; height: 10px; gap: 2px; }
.end { justify-content: flex-end; }
.pair { gap: 5px; }
.spin { width: 6px; height: 10px; }
.lab { width: 8px; color: #aaa; }
.lab.wide { width: 11px; }
.field { height: 9px; border: 0; background: #a3a3a3; color: #222; padding: 0 2px; }
.w26 { width: 26px; }
.w34 { width: 34px; }
.w36 { width: 36px; }
.drop { width: 9px; height: 9px; justify-content: center; background: #404040; margin-left: -1px; }
.g-ref { width: 33px; padding-left: 13px; }
.g-pos { width: 60px; }
.g-size { width: 57px; }
.g-chain { width: 19px; }
.g-scale { width: 62px; }
.g-scale .row, .g-rot .row { gap: 3px; }
.g-scale .drop, .g-rot .drop { margin-left: -3px; }
.g-lock { width: 16px; }
.lock { width: 11px; height: 14px; background: #2b2b2b; justify-content: center; }
.g-rot { width: 63px; }
.g-icons { width: 30px; }
.g-p { width: 22px; }
.para { font: 13px/14px "Liberation Serif", serif; width: 15px; text-align: center; border: 1px dashed #666; }
.g-tree { width: 32px; }
.g-fill { width: 29px; }
.g-fill .row { gap: 4px; }
.g-stroke { width: 45px; margin-right: 7px; }
.line-style { width: 35px; height: 9px; border: 2px solid #a3a3a3; background: #000; }
.g-fx { width: 54px; }
.row.fxrow { gap: 6px; }
.fx { font: italic 9px/10px "Liberation Sans", sans-serif; }
.g-wrap { width: 31px; }
.on { background: #222; outline: 1px solid #222; }
.g-corner { width: 58px; margin-right: 8px; }
.corner-style { width: 35px; height: 9px; background: #a3a3a3; border-right: 2px solid #777; }
.g-fit { width: 79px; }
.row.fits { gap: 4px; }
.fits .gap { margin-left: 5px; }
.row.auto { white-space: nowrap; gap: 4px; }
.auto input { appearance: none; width: 4px; height: 4px; border: 1px solid #777; }
.g-align { width: 68px; }
.g-style { flex: 0 1 111px; border-right: 1px solid #3a3a3a; }
.g-style .row { gap: 6px; }
.combo { display: flex; flex: 1; }
.combo .field { flex: 1; width: 60px; }
.g-end { flex: 1; align-items: flex-end; padding-right: 5px; }
.g-menu { width: 13px; border-left: 1px solid #3a3a3a; padding-left: 2px; }

/* Work area */
.work { flex: 1; display: flex; min-height: 0; background: #2b2b2b; }
.strip { height: 7px; flex: none; display: flex; align-items: center; justify-content: flex-end; padding-right: 3px; background: #2b2b2b; color: #aaa; overflow: hidden; }
.strip.left { justify-content: flex-start; }
.tools { width: 39px; background: #484848; border-right: 1px solid #2b2b2b; display: flex; flex-direction: column; flex: none; }
.grip { height: 7px; flex: none; padding: 2px 0; }
.grip::before { content: ""; display: block; width: 12px; height: 1px; margin: 0 auto; background: #222; }
.toolgrid { display: grid; grid-template-columns: 16px 16px; grid-auto-rows: 13px; padding-left: 3px; border-bottom: 1px solid #3c3c3c; }
.toolgrid button { justify-content: center; position: relative; }
.toolgrid .active { background: #2e2e2e; }
.more::after { content: ""; position: absolute; right: 1px; bottom: 2px; width: 1px; height: 1px; background: #ccc; }
.small { border-bottom: 0; }
.gradient { width: 10px; height: 7px; border: 1px solid #ccc; background: linear-gradient(90deg, #333, #eee); }
.fillstroke { width: 24px; height: 24px; margin: 1px 0 2px 7px; }
.swatches { display: flex; gap: 3px; align-items: center; height: 12px; padding-left: 5px; }
.sw { width: 8px; height: 7px; }
.yellow { background: #fae6a2; }
.grad { background: linear-gradient(90deg, #eee, #444); }

.document { flex: 1; min-width: 0; display: flex; flex-direction: column; margin-right: 2px; }
.tabs { height: 16px; flex: none; background: #333; display: flex; }
.tab { display: flex; align-items: center; gap: 6px; padding: 0 7px 0 9px; background: #424242; color: #e0e0e0; font-weight: 700; white-space: nowrap; width: 190px; }
.tab button { color: #aaa; }
.split { flex: 1; display: flex; min-height: 0; }
.structure { width: 113px; flex: none; display: flex; flex-direction: column; background: #484848; border-right: 3px solid #333; }
.structure-head { height: 15px; display: flex; align-items: center; gap: 7px; padding-left: 5px; color: #7c7c7c; }
.structure-head strong { width: 22px; color: #b4b4b4; }
.structure-head svg:last-child { margin-left: 4px; }
.structure-body { flex: 1; display: flex; min-height: 0; }
.tree { flex: 1; min-width: 0; background: #e4e4e4; color: #222; overflow: hidden; }
.tree li { height: 11px; display: flex; align-items: center; gap: 4px; padding-left: 22px; white-space: nowrap; }
.tree .root { padding-left: 1px; gap: 3px; }
.tree .marked { margin-left: 6px; background: #e2a9b1; color: #6b2438; }
.tree .logo-item { padding-left: 5px; }
.tree .logo-item svg:first-child { margin-right: -1px; }
.tree .attr { padding-left: 11px; gap: 2px; }
.bullet { flex: none; width: 4px; height: 4px; border-radius: 50%; background: #8c2b40; }
.vbar { width: 8px; background: #404040; }
.hbar { height: 9px; flex: none; display: flex; align-items: center; background: #2b2b2b; width: 102px; }
.thumb { width: 44px; height: 7px; background: #8a8a8a; margin-left: 1px; }
.last { margin-left: auto; }

.page-view { flex: 1; min-width: 0; display: flex; flex-direction: column; }
.ruler-row { height: 8px; flex: none; display: flex; background: #1d1d1d; }
.ruler-corner { width: 8px; height: 8px; border: 1px dotted #777; }
.ruler-h { flex: 1; height: 8px; min-width: 0; }
.ruler-text { font: 5px "Open Sans", sans-serif; fill: #ccc; }
.canvas-row { flex: 1; display: flex; min-height: 0; }
.ruler-v { width: 8px; height: 100%; background: #1d1d1d; }
.canvas { flex: 1; min-width: 0; position: relative; overflow: hidden; background: #5f5f5f; }
.vscroll { width: 8px; background: #2f2f2f; display: flex; flex-direction: column; justify-content: flex-end; }
.vthumb { height: 151px; background: #8a8a8a; margin-bottom: 33px; }
.status { height: 9px; flex: none; display: flex; align-items: center; background: #404040; padding-left: 5px; white-space: nowrap; gap: 3px; }
.page-no { width: 36px; padding-left: 3px; }
.status .next { margin-left: 5px; }
.status .clock { margin: 0 4px 0 3px; }
.profile { width: 52px; }
.led { width: 6px; height: 6px; border-radius: 50%; background: #4cae2e; margin-left: 2px; }
.err { margin-left: 1px; }
.hscroll { flex: 1; display: flex; align-items: center; height: 9px; background: #2f2f2f; }
.hthumb { width: 192px; height: 7px; background: #8a8a8a; margin-left: 99px; }
.splitter { margin-right: 8px; }

/* Business card on the pasteboard */
.card { position: absolute; left: 160px; top: 41px; width: 539px; height: 357px; background: #fae6a4; border: 1px solid #cf6a55; }
.art { position: absolute; left: -1px; top: -1px; width: 539px; height: 357px; }
.card-text { position: relative; padding: 88px 0 0 3px; text-align: center; color: #111; font-family: "Open Sans", sans-serif; font-weight: 300; }
.card-text h1 { font-size: 23px; line-height: 30px; font-weight: 600; letter-spacing: 3px; }
.role { font-size: 12px; line-height: 24px; letter-spacing: 4px; }
.phone { font-size: 17px; line-height: 24px; letter-spacing: 3px; padding-top: 35px; }
.mail { font-size: 17px; line-height: 22px; letter-spacing: 3px; }
.phone + .mail { padding-top: 17px; }

/* Docks */
.dock { flex: none; background: #484848; border-right: 2px solid #2b2b2b; font-family: "Open Sans", sans-serif; }
.narrow { width: 65px; }
.broad { width: 87px; }
.dock-group { border-bottom: 1px solid #2f2f2f; padding: 0 2px 0 1px; }
.dock-group::before { content: ""; display: block; width: 12px; height: 2px; margin: 0 auto 2px; border-bottom: 1px solid #222; }
.dock-group button { width: 100%; height: 15px; gap: 3px; padding-left: 3px; font-weight: 600; color: #e0e0e0; }
.dock-group .active { background: #2f2f2f; }

/* Floating panels */
.panel { position: absolute; background: #484848; border: 1px solid #2b2b2b; box-shadow: 0 1px 3px #0006; }
.panel-top { height: 8px; background: #2b2b2b; display: flex; justify-content: flex-end; align-items: center; gap: 2px; }
.panel-tabs { display: flex; align-items: center; background: #333; font-family: "Open Sans", sans-serif; }
.panel-tabs > svg { margin-left: auto; margin-right: 3px; color: #999; }
.ptab { align-self: stretch; padding: 0 7px; color: #999; }
.ptab.active { background: #484848; color: #e8e8e8; font-weight: 600; }
.panel-grip { height: 4px; border-top: 1px solid #333; }
.panel-grip::before { content: ""; display: block; width: 10px; height: 2px; margin: 0 auto; background: #222; }
.mini-scroll { display: flex; flex-direction: column; justify-content: space-between; width: 7px; background: #383838; }

.tags { left: 173px; top: 273px; width: 129px; }
.tags .panel-tabs { height: 12px; }
.tags .ptab { padding: 0 6px 0 2px; gap: 1px; }
.tag-actions { padding: 4px 4px 3px; display: flex; flex-direction: column; gap: 2px; color: #7c7c7c; }
.untag { width: 73px; height: 9px; align-self: center; justify-content: center; background: #5e5e5e; border: 1px solid #333; color: #e0e0e0; }
.tag-actions label { display: flex; align-items: center; gap: 4px; height: 9px; }
.tag-actions input { appearance: none; width: 4px; height: 4px; border-radius: 50%; border: 1px solid #5a5a5a; }
.tag-actions input:checked { background: #8a8a8a; }
.tag-body { display: flex; border: 1px solid #2f2f2f; border-width: 1px 0; }
.tag-list { flex: 1; }
.tag-list li { display: flex; align-items: center; gap: 3px; height: 12px; padding-left: 5px; border-bottom: 1px solid #353535; }
.tag-list .active { background: #43566b; color: #fff; font-weight: 700; }
.chip { width: 5px; height: 5px; outline: 1px solid #1a1a1a; }
.orange { background: #f07818; }
.violet { background: #a030e0; }
.blue { background: #1010b0; }
.maroon { background: #8a1010; }
.tag-foot { height: 12px; display: flex; align-items: center; justify-content: flex-end; gap: 6px; padding-right: 12px; }

.links { right: 153px; top: 54px; width: 129px; }
.links .panel-tabs { height: 15px; }
.links .ptab:first-child { padding: 0 6px; width: 33px; }
.links .panel-tabs > svg { margin-right: 5px; }
.links .panel-tabs > svg:last-child { margin-left: 0; margin-right: 2px; }
.links-body { display: flex; height: 110px; }
.links-body .mini-scroll { margin-top: 12px; }
.link-table { flex: 1; align-self: flex-start; border-collapse: collapse; table-layout: fixed; }
.link-table th { height: 12px; padding: 0 0 0 2px; text-align: left; font-weight: 700; border-bottom: 1px solid #383838; }
.link-table td { height: 12px; padding: 0 0 0 1px; border-bottom: 1px solid #3c3c3c; }
.link-table .c-st { width: 24px; padding-left: 5px; }
.link-table .c-pg { width: 17px; padding-left: 2px; }
.link-table th.c-st { padding-left: 7px; }
.pg-icons { display: flex; align-items: center; }
.c-pg a { color: #e08a3c; text-decoration: underline; padding-left: 5px; }
.link-table .active { background: #43566b; color: #fff; }
.file { display: flex; align-items: center; gap: 3px; }
.click { position: relative; display: block; }
.click::after { content: ""; position: absolute; left: -5px; top: -5px; width: 18px; height: 18px; border-radius: 50%; background: #d8486c; opacity: .6; }
.links-scroll { height: 7px; display: flex; align-items: center; background: #303030; margin-right: 7px; }
.links-scroll span { flex: 1; height: 6px; background: #8a8a8a; margin-right: 6px; }
.links-tools { height: 16px; display: flex; align-items: center; gap: 5px; padding-left: 2px; color: #c8c8c8; white-space: nowrap; }
.links-tools span { margin: 0 -3px 0 -4px; }
.info-head { height: 16px; display: flex; align-items: center; gap: 5px; padding: 0 4px 0 2px; border-top: 1px solid #333; }
.info-head strong { flex: 1; font-weight: 700; }
.info-body { display: flex; height: 32px; overflow: hidden; }
.info-body dl { flex: 1; display: grid; grid-template-columns: 61px 1fr; column-gap: 2px; grid-auto-rows: 11px; align-items: center; }
.info-body dt { text-align: right; font-weight: 700; }
.info-arrows { width: 8px; display: flex; flex-direction: column; gap: 5px; }
```
